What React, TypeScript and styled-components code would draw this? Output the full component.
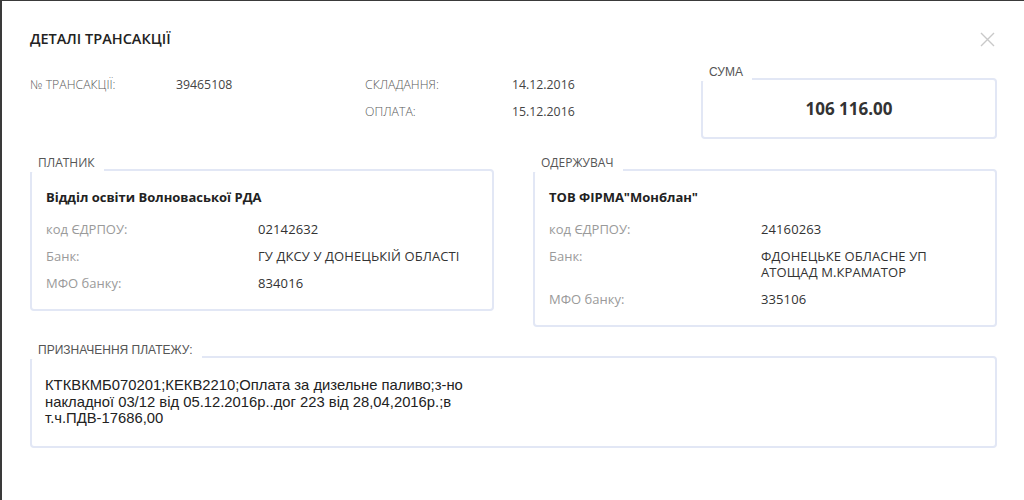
import React from "react";
import styled, { createGlobalStyle } from "styled-components";

const Global = createGlobalStyle`
  html, body { margin: 0; padding: 0; background: #fff; }
  body { font-family: "Open Sans", "Liberation Sans", sans-serif; }
  * { box-sizing: border-box; }
`;

const Page = styled.div`
  width: 1024px;
  height: 500px;
  overflow: hidden;
  background: #fff;
  border-top: 1px solid #3a3a3a;
  border-left: 2px solid #3a3a3a;
  padding: 28px 27px 0 28px;
  display: flex;
  flex-direction: column;
`;

const Header = styled.div`
  display: flex;
  align-items: center;
  justify-content: space-between;
  height: 20px;
`;

const Title = styled.h1`
  margin: 0;
  font-size: 14.5px;
  line-height: 20px;
  font-weight: 600;
  color: #222;
`;

const Close = styled.button`
  border: 0;
  background: transparent;
  padding: 0;
  width: 16px;
  height: 16px;
  margin-right: 2px;
  display: flex;
  align-items: center;
  justify-content: center;
  cursor: pointer;
`;

const TopRow = styled.div`
  display: flex;
  align-items: flex-start;
  margin-top: 16px;
`;

const InfoGrid = styled.div`
  display: grid;
  grid-template-columns: 146px 189px 147px 189px;
  row-gap: 11px;
  margin-top: 12px;
  font-size: 12.3px;
  line-height: 16px;
`;

const InfoLabel = styled.div`
  color: #5a5a5a;
  font-weight: 300;
  text-transform: uppercase;
`;

const InfoValue = styled.div`
  color: #444;
`;

const Section = styled.section<{ $width?: string }>`
  display: flex;
  flex-direction: column;
  width: ${(p) => p.$width || "auto"};
  flex: ${(p) => (p.$width ? "none" : "1")};
`;

const Legend = styled.div<{ $arial?: boolean }>`
  align-self: flex-start;
  position: relative;
  z-index: 1;
  background: #fff;
  padding: 0 9px 2px 8px;
  margin-bottom: -3px;
  font-family: ${(p) =>
    p.$arial ? `"Liberation Sans", Arial, sans-serif` : `"Open Sans", sans-serif`};
  font-size: 12px;
  line-height: 14px;
  color: #555;
  text-transform: uppercase;
`;

const Box = styled.div<{ $pad?: string }>`
  border: 2px solid #e2e7f5;
  border-radius: 4px;
  padding: ${(p) => p.$pad || "18px 14px 18px"};
  background: #fff;
`;

const SumBox = styled(Box)`
  height: 61px;
  display: flex;
  align-items: center;
  justify-content: center;
  font-size: 17px;
  font-weight: 700;
  color: #333;
  padding: 0;
`;

const Parties = styled.div`
  display: flex;
  align-items: flex-start;
  gap: 39px;
  margin-top: 17px;
`;

const Name = styled.div`
  font-size: 13px;
  line-height: 16px;
  font-weight: 700;
  color: #222;
  margin-bottom: 16px;
`;

const Rows = styled.div`
  display: grid;
  grid-template-columns: 212px 1fr;
  row-gap: 11px;
  font-size: 13px;
  line-height: 16px;
`;

const RowLabel = styled.div`
  color: #9a9a9a;
`;

const RowValue = styled.div`
  color: #333;
  text-transform: uppercase;
  letter-spacing: 0.1px;
`;

const Purpose = styled.div`
  margin-top: 16px;
  display: flex;
  flex-direction: column;
`;

const PurposeText = styled.p`
  margin: 0;
  width: 436px;
  font-family: "Liberation Sans", Arial, sans-serif;
  font-size: 14.8px;
  line-height: 16.5px;
  color: #222;
`;

type Party = {
  legend: string;
  name: string;
  code: string;
  bank: string[];
  mfo: string;
};

const parties: Party[] = [
  {
    legend: "Платник",
    name: "Відділ освіти Волноваської РДА",
    code: "02142632",
    bank: ["ГУ ДКСУ У ДОНЕЦЬКІЙ ОБЛАСТІ"],
    mfo: "834016",
  },
  {
    legend: "Одержувач",
    name: 'ТОВ ФІРМА"Монблан"',
    code: "24160263",
    bank: ["ФДОНЕЦЬКЕ ОБЛАСНЕ УП", "АТОЩАД М.КРАМАТОР"],
    mfo: "335106",
  },
];

export default function App() {
  return (
    <>
      <Global />
      <Page>
        <Header>
          <Title>ДЕТАЛІ ТРАНСАКЦІЇ</Title>
          <Close aria-label="close">
            <svg width="15" height="15" viewBox="0 0 15 15">
              <path d="M1 1 L14 14 M14 1 L1 14" stroke="#c9c9c9" strokeWidth="1.4" fill="none" />
            </svg>
          </Close>
        </Header>

        <TopRow>
          <InfoGrid>
            <InfoLabel>№ трансакції:</InfoLabel>
            <InfoValue>39465108</InfoValue>
            <InfoLabel>Складання:</InfoLabel>
            <InfoValue>14.12.2016</InfoValue>
            <div />
            <div />
            <InfoLabel>Оплата:</InfoLabel>
            <InfoValue>15.12.2016</InfoValue>
          </InfoGrid>
          <Section>
            <Legend $arial>Сума</Legend>
            <SumBox>106 116.00</SumBox>
          </Section>
        </TopRow>

        <Parties>
          {parties.map((p) => (
            <Section key={p.legend} $width="464px">
              <Legend>{p.legend}</Legend>
              <Box>
                <Name>{p.name}</Name>
                <Rows>
                  <RowLabel>код ЄДРПОУ:</RowLabel>
                  <RowValue>{p.code}</RowValue>
                  <RowLabel>Банк:</RowLabel>
                  <RowValue>
                    {p.bank.map((b) => (
                      <div key={b}>{b}</div>
                    ))}
                  </RowValue>
                  <RowLabel>МФО банку:</RowLabel>
                  <RowValue>{p.mfo}</RowValue>
                </Rows>
              </Box>
            </Section>
          ))}
        </Parties>

        <Purpose>
          <Legend $arial>Призначення платежу:</Legend>
          <Box $pad="19px 13px 19px">
            <PurposeText>
              КТКВКМБ070201;КЕКВ2210;Оплата за дизельне паливо;з-но накладної 03/12 від
              05.12.2016р..дог 223 від 28,04,2016р.;в т.ч.ПДВ-17686,00
            </PurposeText>
          </Box>
        </Purpose>
      </Page>
    </>
  );
}
